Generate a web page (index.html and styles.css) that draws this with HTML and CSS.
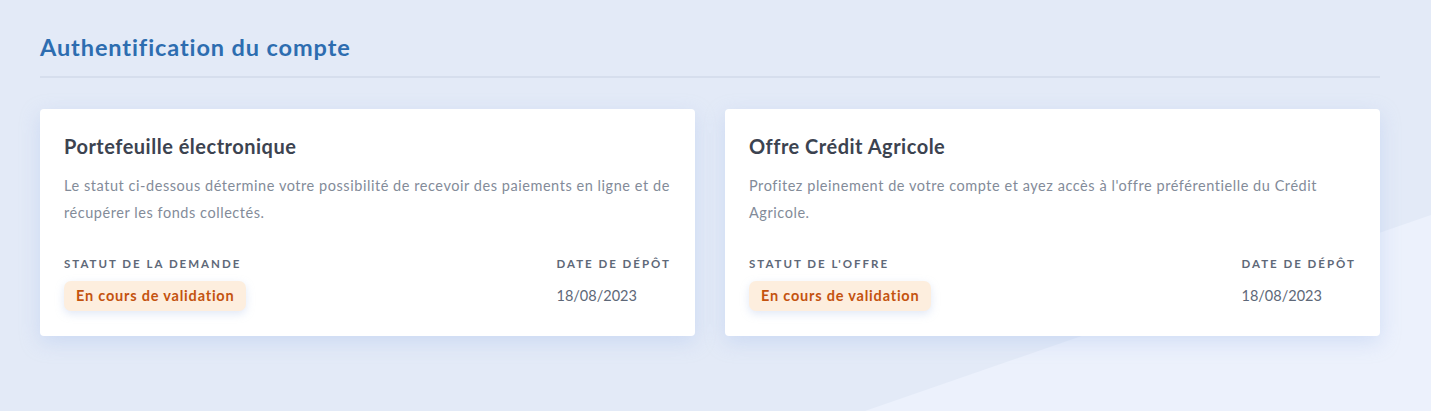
FILE: index.html
```html
<!DOCTYPE html>
<html lang="fr">
<head>
<meta charset="utf-8">
<title>Authentification du compte</title>
<link rel="stylesheet" href="styles.css">
</head>
<body>
<div class="bg-shape"></div>
<main class="page">
  <h1 class="page-title">Authentification du compte</h1>
  <div class="divider"></div>
  <section class="cards">
    <article class="card">
      <h2 class="card-title">Portefeuille électronique</h2>
      <p class="card-desc">Le statut ci-dessous détermine votre possibilité de recevoir des paiements en ligne et de récupérer les fonds collectés.</p>
      <div class="card-meta">
        <div class="meta-col">
          <div class="meta-label">Statut de la demande</div>
          <span class="badge">En cours de validation</span>
        </div>
        <div class="meta-col">
          <div class="meta-label">Date de dépôt</div>
          <div class="meta-value">18/08/2023</div>
        </div>
      </div>
    </article>
    <article class="card">
      <h2 class="card-title">Offre Crédit Agricole</h2>
      <p class="card-desc">Profitez pleinement de votre compte et ayez accès à l'offre préférentielle du Crédit Agricole.</p>
      <div class="card-meta">
        <div class="meta-col">
          <div class="meta-label">Statut de l'offre</div>
          <span class="badge">En cours de validation</span>
        </div>
        <div class="meta-col">
          <div class="meta-label">Date de dépôt</div>
          <div class="meta-value">18/08/2023</div>
        </div>
      </div>
    </article>
  </section>
</main>
</body>
</html>
```
FILE: styles.css
```css
* { box-sizing: border-box; }
html, body {
  margin: 0;
  padding: 0;
  height: 100%;
}
body {
  background: #e3eaf7;
  font-family: "Lato", "Noto Sans", sans-serif;
  position: relative;
  overflow: hidden;
}
.bg-shape {
  position: absolute;
  inset: 0;
  background: #ecf1fc;
  clip-path: polygon(865px 411px, 1431px 215px, 1431px 411px);
  z-index: 0;
}
.page {
  position: relative;
  z-index: 1;
  padding: 32px 51px 0 40px;
}
.page-title {
  margin: 0;
  font-size: 23.5px;
  line-height: 30px;
  font-weight: 700;
  color: #2d6db0;
  letter-spacing: 0.9px;
}
.divider {
  height: 2px;
  background: #d6deed;
  margin-top: 14px;
}
.cards {
  display: grid;
  grid-template-columns: 1fr 1fr;
  gap: 30px;
  margin-top: 31px;
}
.card {
  background: #fff;
  border-radius: 4px;
  padding: 24px 24px 25px 24px;
  box-shadow: 0 6px 20px rgba(160, 185, 235, 0.35);
}
.card-title {
  margin: 0;
  font-size: 20px;
  line-height: 26px;
  font-weight: 700;
  color: #3c4350;
  letter-spacing: 0.5px;
}
.card-desc {
  margin: 13px -6px 0 0;
  font-size: 14.5px;
  line-height: 27px;
  color: #838b99;
  letter-spacing: 0.55px;
}
.card-meta {
  display: flex;
  justify-content: space-between;
  margin-top: 30px;
}
.meta-col {
  display: flex;
  flex-direction: column;
  align-items: flex-start;
}
.meta-label {
  font-size: 11.5px;
  line-height: 16px;
  font-weight: 700;
  letter-spacing: 2px;
  text-transform: uppercase;
  color: #5e6878;
}
.badge {
  margin-top: 9px;
  display: inline-block;
  height: 30px;
  line-height: 30px;
  padding: 0 12px;
  border-radius: 7px;
  background: #fdeede;
  color: #c4530f;
  font-weight: 700;
  font-size: 14.5px;
  letter-spacing: 0.8px;
  box-shadow: 0 3px 8px rgba(170, 190, 230, 0.35);
}
.meta-value {
  margin-top: 9px;
  line-height: 30px;
  font-size: 14.5px;
  color: #5e6878;
}
```
